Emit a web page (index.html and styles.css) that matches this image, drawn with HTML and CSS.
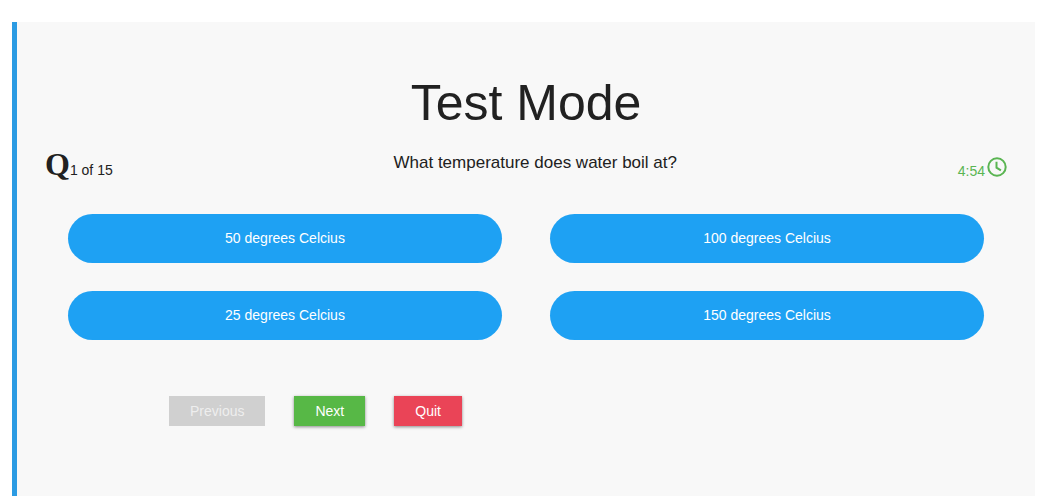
FILE: index.html
```html
<!DOCTYPE html>
<html lang="en">
<head>
<meta charset="utf-8">
<title>Test Mode</title>
<link rel="stylesheet" href="styles.css">
</head>
<body>
<main class="quiz">
  <h1 class="title">Test Mode</h1>
  <div class="status">
    <div class="progress"><span class="mark">Q</span><span>1 of 15</span></div>
    <h2 class="question">What temperature does water boil at?</h2>
    <div class="timer">
      <span>4:54</span>
      <svg class="clock" viewBox="0 0 20 20" aria-hidden="true">
        <circle cx="10" cy="10" r="8.7"/>
        <path d="M9.5 4.8v5.8l4.4 2.8"/>
      </svg>
    </div>
  </div>
  <div class="options">
    <button class="option" type="button">50 degrees Celcius</button>
    <button class="option" type="button">100 degrees Celcius</button>
    <button class="option" type="button">25 degrees Celcius</button>
    <button class="option" type="button">150 degrees Celcius</button>
  </div>
  <div class="actions">
    <button class="action previous" type="button" disabled>Previous</button>
    <button class="action next" type="button">Next</button>
    <button class="action quit" type="button">Quit</button>
  </div>
</main>
</body>
</html>
```
FILE: styles.css
```css
* {
  box-sizing: border-box;
}

body {
  margin: 0;
  padding: 22px 16px 7px 12px;
  background: #fff;
  color: #212121;
  font-family: "Liberation Sans", Arial, sans-serif;
  font-size: 14px;
}

.quiz {
  padding: 52px 0 70px;
  border-left: 5px solid #2b9be3;
  background: #f8f8f8;
}

.title {
  margin: 0;
  font-size: 50px;
  font-weight: 400;
  line-height: 58px;
  text-align: center;
}

.status {
  display: flex;
  justify-content: space-between;
  align-items: flex-start;
  margin-top: 14px;
  padding: 0 28px;
}

.progress {
  display: flex;
  align-items: baseline;
  line-height: 36px;
}

.mark {
  font-family: "Liberation Serif", "Times New Roman", serif;
  font-size: 32px;
  font-weight: 700;
}

.question {
  margin: 0;
  font-size: 17px;
  font-weight: 400;
  line-height: 34px;
}

.timer {
  display: flex;
  align-items: flex-end;
  gap: 2px;
  padding-top: 11px;
  color: #5ab552;
  line-height: 16px;
}

.clock {
  width: 20px;
  height: 20px;
  margin-bottom: 2px;
  fill: none;
  stroke: currentColor;
  stroke-width: 2;
}

.options {
  display: grid;
  grid-template-columns: 1fr 1fr;
  gap: 28px 48px;
  margin-top: 26px;
  padding: 0 51px;
}

.option {
  padding: 16px;
  border: 0;
  border-radius: 25px;
  background: #1ea1f3;
  color: #fff;
  font: 14px/17px "Liberation Sans", Arial, sans-serif;
}

.actions {
  display: flex;
  gap: 29px;
  margin-top: 56px;
  padding: 0 152px;
}

.action {
  padding: 0 21px;
  border: 0;
  color: #fff;
  font: 14px/30px "Liberation Sans", Arial, sans-serif;
  box-shadow: 0 1px 3px rgba(0, 0, 0, 0.45);
}

.previous {
  background: #d0d0d0;
  color: #eee;
  box-shadow: none;
}

.next {
  background: #57b846;
}

.quit {
  background: #ea4457;
}
```
